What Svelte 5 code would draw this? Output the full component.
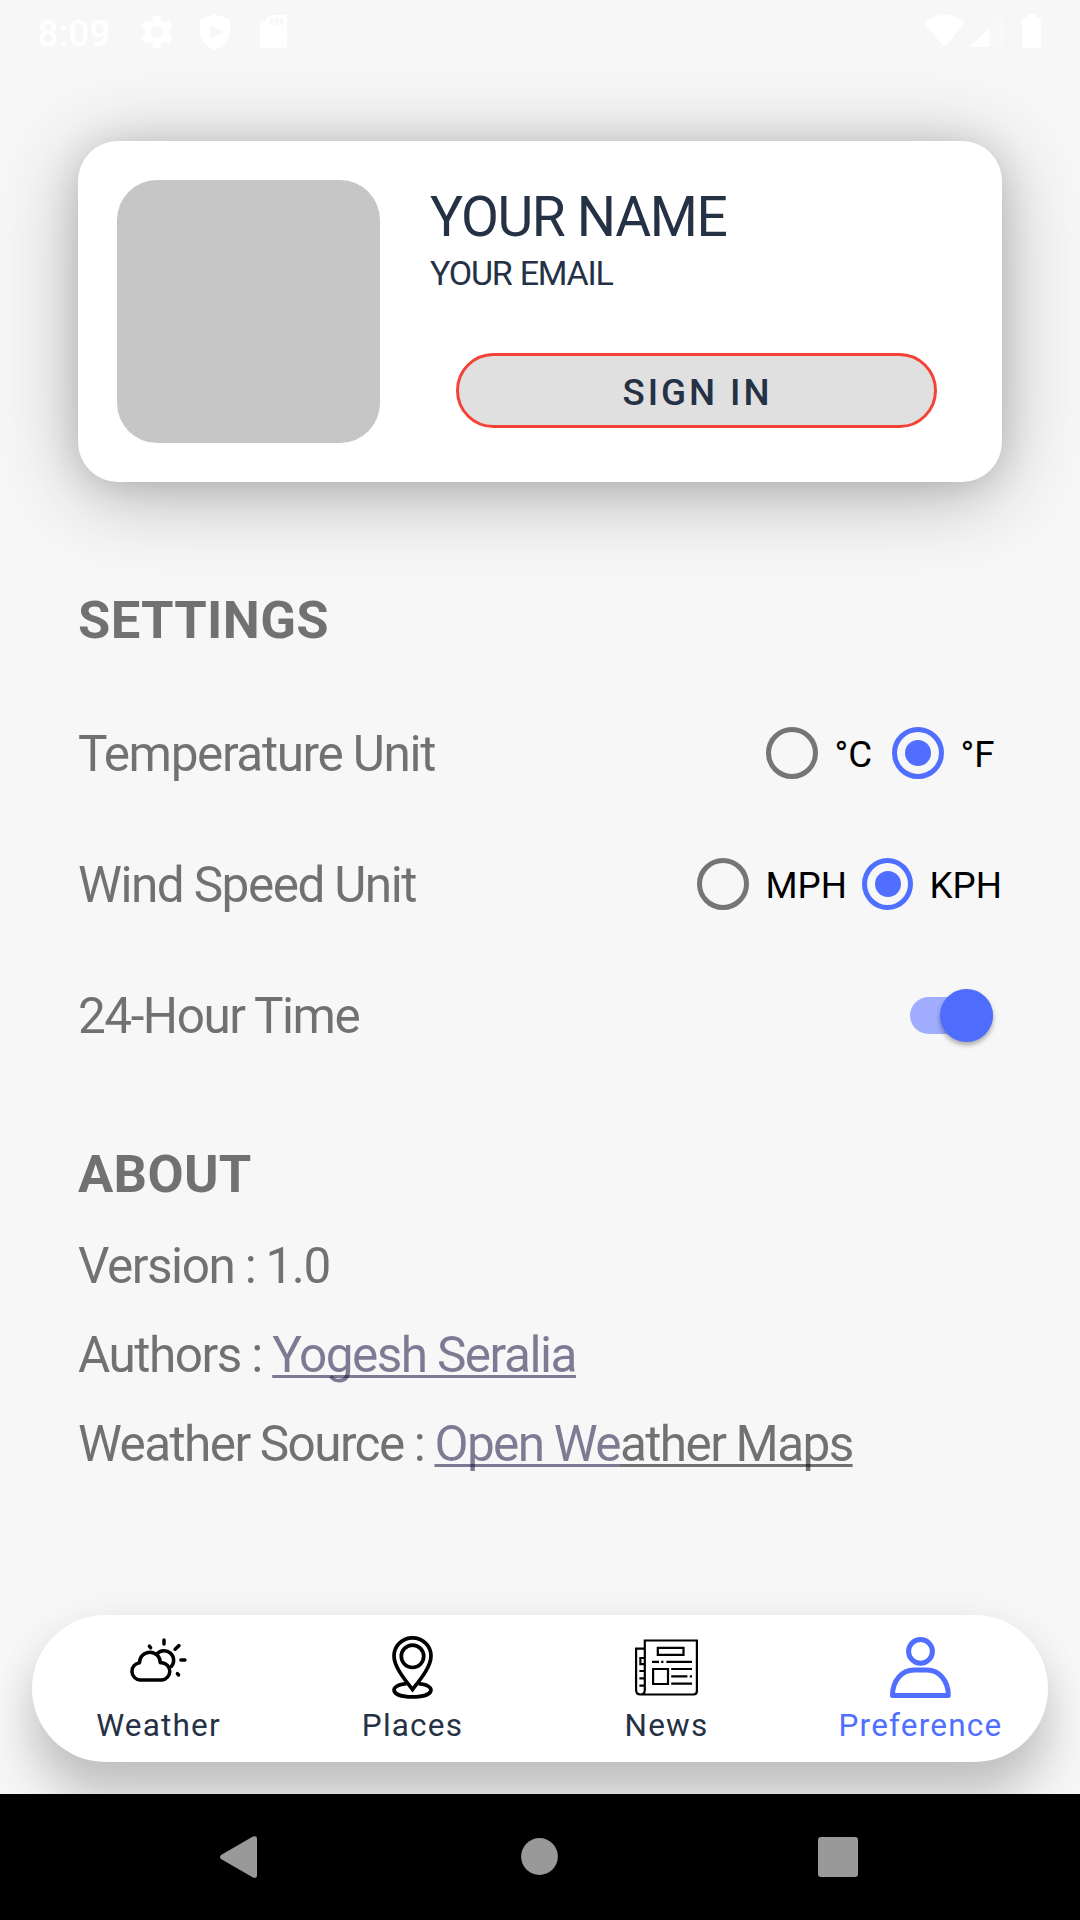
<script>
  let temperature = $state('°F');
  let wind = $state('KPH');
  let hour24 = $state(true);
  const rows = [
    { label: 'Temperature Unit', key: 'temp', options: ['°C', '°F'] },
    { label: 'Wind Speed Unit', key: 'wind', options: ['MPH', 'KPH'] }
  ];
  const chosen = (key) => (key === 'temp' ? temperature : wind);
  function choose(key, value) {
    if (key === 'temp') temperature = value;
    else wind = value;
  }
</script>

<div class="screen">
  <header class="status">
    <span class="time">8:09</span>
    <svg class="gear" width="40" height="40" viewBox="0 0 24 24"><path d="M19.14 12.94c.04-.3.06-.61.06-.94 0-.32-.02-.64-.07-.94l2.03-1.58a.49.49 0 0 0 .12-.61l-1.92-3.32a.49.49 0 0 0-.59-.22l-2.39.96c-.5-.38-1.03-.7-1.62-.94l-.36-2.54a.48.48 0 0 0-.48-.41h-3.84a.48.48 0 0 0-.47.41l-.36 2.54c-.59.24-1.13.57-1.62.94l-2.39-.96a.48.48 0 0 0-.59.22L2.74 8.87a.48.48 0 0 0 .12.61l2.03 1.58c-.05.3-.09.63-.09.94s.02.64.07.94l-2.03 1.58a.49.49 0 0 0-.12.61l1.92 3.32c.12.22.37.29.59.22l2.39-.96c.5.38 1.03.7 1.62.94l.36 2.54c.05.24.24.41.48.41h3.84c.24 0 .44-.17.47-.41l.36-2.54c.59-.24 1.13-.56 1.62-.94l2.39.96c.22.08.47 0 .59-.22l1.92-3.32a.48.48 0 0 0-.12-.61zM12 15.6A3.6 3.6 0 1 1 12 8.4a3.6 3.6 0 0 1 0 7.2z"/></svg>
    <svg class="shield" width="30" height="36" viewBox="0 0 30 36"><path fill-rule="evenodd" d="M15 0 30 6V16C30 26 24 33.500 15 36 6 33.500 0 26 0 16V6ZM10 11V25L23 18Z"/></svg>
    <svg class="sd" width="27" height="33" viewBox="0 0 27 33"><path fill-rule="evenodd" d="M10 0H24Q27 0 27 3V30Q27 33 24 33H3Q0 33 0 30V10ZM10 3.500V10H13.500V3.500ZM15.200 3.500V10H18.500V3.500ZM20.200 3.500V10H23.500V3.500Z"/></svg>
    <svg class="wifi" width="41" height="31" viewBox="0 0 41 31"><path d="M1 6.500C12-2.100 29-2.100 40 6.500Q41.200 7.500 40 9L22.500 29.800Q20.500 31.700 18.500 29.800L1 9Q-.2 7.500 1 6.500Z"/></svg>
    <svg class="signal" width="31" height="31" viewBox="0 0 31 31"><path opacity=".3" d="M18 13 29 1.500Q31 0 31 2V31H18Z"/><path d="M18 12.500V31H1.500Q-.8 31 .8 29Z"/></svg>
    <svg class="battery" width="19" height="34" viewBox="0 0 19 34"><path d="M5 0H14V4H17.500Q19 4 19 5.500V32.500Q19 34 17.500 34H1.500Q0 34 0 32.500V5.500Q0 4 1.500 4H5Z"/></svg>
  </header>

  <main>
    <section class="card">
      <div class="avatar"></div>
      <div class="profile">
        <div class="name">YOUR NAME</div>
        <div class="email">YOUR EMAIL</div>
        <button class="signin">SIGN IN</button>
      </div>
    </section>

    <h2 class="settings-title">SETTINGS</h2>
    {#each rows as row}
      <div class="row {row.key}">
        <span class="label">{row.label}</span>
        <div class="options">
          {#each row.options as option}
            <button class="option" class:on={chosen(row.key) === option} onclick={() => choose(row.key, option)}>
              <span class="radio"></span><span class="unit">{option}</span>
            </button>
          {/each}
        </div>
      </div>
    {/each}
    <div class="row">
      <span class="label">24-Hour Time</span>
      <button class="switch" class:off={!hour24} aria-label="24-Hour Time" onclick={() => (hour24 = !hour24)}><span class="thumb"></span></button>
    </div>

    <h2 class="about-title">ABOUT</h2>
    <p>Version : 1.0</p>
    <p>Authors : <span class="link visited">Yogesh Seralia</span></p>
    <p class="source">Weather Source : <span class="link visited">Open We</span><span class="link">ather Maps</span></p>
  </main>

  <nav class="tabs">
    <div class="tab">
      <svg width="63" height="63" viewBox="0 0 63 63" stroke-width="3.500" stroke-linecap="round" stroke-linejoin="round"><path d="M13 44H35A8.700 8.700 0 0 0 35 26.700H33.300A10.400 10.400 0 0 0 12.500 26.700A8.700 8.700 0 0 0 13 44Z"/><path d="M30 18A9.300 9.300 0 1 1 44.300 30.500M37 4V8M48.100 13.200 52 9.600M53.900 24H57.900M50.400 37.600 51.600 39M22.400 10.200 23.600 11.800"/></svg>
      <span>Weather</span>
    </div>
    <div class="tab">
      <svg width="63" height="63" viewBox="0 0 63 63" stroke-width="3.700"><path d="M31.500 53.500C24.500 44.500 13 31 13 20A18.500 18.200 0 0 1 50 20C50 31 38.500 44.500 31.500 53.500Z"/><circle cx="31.500" cy="20.300" r="11.200"/><path d="M25.500 47.600C8 49 8 60.700 31.500 60.900 55 60.700 55 49 37.500 47.600"/></svg>
      <span>Places</span>
    </div>
    <div class="tab">
      <svg width="63" height="63" viewBox="0 0 63 63" stroke-width="2.200"><path d="M5.500 58.500Q9.800 58.500 9.800 54V4.500H61.900V55Q61.900 58.500 58.400 58.500H5.500Q1.100 58.500 1.100 54V12.700H9.800M9.800 22H5.400V28.200H9.800M4.400 35H9.800M4.400 42.300H9.800M4.400 49.700H9.800M22.800 11.800H48.500V18.900H22.800ZM17 25.800H24M26.200 25.800H28.400M31.400 25.800H57M18.100 33H33V48H18.100ZM36.200 33H57M36.200 40.300H52.400M54.800 40.300H57M36.200 47.700H57"/></svg>
      <span>News</span>
    </div>
    <div class="tab active">
      <svg width="63" height="63" viewBox="0 0 63 63" stroke-width="5" stroke-linejoin="round"><circle cx="31.500" cy="15.400" r="11.900"/><path d="M3.500 59.400C3.500 44.500 13 34 25 34H38C50 34 59.300 44.500 59.300 59.400Z"/></svg>
      <span>Preference</span>
    </div>
  </nav>

  <footer>
    <svg width="37" height="42" viewBox="0 0 37 42"><path d="M1 19 33 .6Q37-1 37 3V39Q37 43 33 41.400L1 23Q-1 21 1 19Z"/></svg>
    <svg class="home" width="37" height="37" viewBox="0 0 37 37"><circle cx="18.500" cy="18.500" r="18.400"/></svg>
    <svg width="40" height="40" viewBox="0 0 40 40"><rect width="40" height="40" rx="3"/></svg>
  </footer>
</div>

<style>
  :global(body) { margin: 0; background: #f7f7f7; }
  .screen {
    width: 1080px; height: 1920px; overflow: hidden; display: flex; flex-direction: column;
    background: #f7f7f7; font-family: Roboto, sans-serif; color: rgba(0, 0, 0, .54);
  }
  button { font: inherit; border: 0; padding: 0; background: none; color: inherit; }
  svg { display: block; flex: none; }
  .status { height: 63px; display: flex; align-items: flex-start; box-sizing: border-box; padding: 0 39px 0 37.500px; fill: #fff; color: #fff; flex: none; }
  .time { width: 99.500px; font-size: 37px; font-weight: 500; line-height: 43px; padding-top: 12px; }
  .gear { margin-top: 12px; }
  .shield { margin: 14px 0 0 23px; }
  .sd { margin: 15px 0 0 30px; }
  .wifi { margin: 14.500px 0 0 auto; }
  .signal { margin: 15.500px 0 0 6px; }
  .battery { margin: 14px 0 0 20px; }

  main { flex: 1; padding: 78px 78px 0 78px; }
  .card {
    height: 341px; box-sizing: border-box; border-radius: 40px; background: #fff; display: flex; padding: 39px;
    box-shadow: 0 12px 84px rgba(0, 0, 0, .27), 0 4px 36px rgba(0, 0, 0, .13);
  }
  .avatar { width: 263px; height: 263px; border-radius: 40px; background: #c6c6c6; flex: none; }
  .profile { flex: 1; display: flex; flex-direction: column; padding-left: 50px; color: #253145; }
  .name { font-size: 55.125px; line-height: 64px; margin-top: 5px; letter-spacing: -.025em; }
  .email { font-size: 34px; line-height: 40px; margin-top: 4px; letter-spacing: -.036em; word-spacing: 1px; }
  .signin {
    box-sizing: border-box; width: 481px; height: 75px; margin: 60px 0 0 26px; padding: 3px 0 0 2px; border: 3px solid #f44336; border-radius: 38px;
    background: #e0e0e0; font-size: 36.750px; font-weight: 500; letter-spacing: .08em; flex: none;
  }
  h2 { margin: 0; font-size: 52.500px; line-height: 62px; font-weight: 700; letter-spacing: .006em; }
  .settings-title { margin-top: 107px; }
  .row { height: 131px; display: flex; align-items: center; justify-content: space-between; }
  .settings-title + .row { margin-top: 37px; }
  .label, p { font-size: 49.500px; line-height: 58px; letter-spacing: -.03em; word-spacing: -.4px; }
  .temp .label { letter-spacing: -.028em; }
  p.source { letter-spacing: -.0325em; }
  .options { display: flex; }
  .option { display: flex; align-items: center; color: #000; font-size: 36.750px; line-height: 43px; }
  .radio { box-sizing: border-box; width: 52px; height: 52px; margin-bottom: 2px; border: 5.250px solid #757575; border-radius: 50%; display: grid; place-items: center; }
  .on .radio { border-color: #506eff; }
  .on .radio::after { content: ''; width: 26px; height: 26px; border-radius: 50%; background: #506eff; }
  .unit { margin-left: 16.500px; padding-top: 1px; text-align: left; }
  .temp .option { width: 126px; }
  .temp .option:last-child { width: 110px; }
  .wind .option { width: 165px; }
  .wind .option:last-child { width: 140px; }
  .switch { width: 82.500px; height: 37px; border-radius: 19px; background: #a1adff; display: flex; align-items: center; justify-content: flex-end; margin-right: 9.500px; }
  .thumb { width: 52.500px; height: 52.500px; border-radius: 50%; background: #4f6dfd; box-shadow: 0 3px 5px rgba(0, 0, 0, .32); }
  .off { background: #bbb; justify-content: flex-start; }
  .off .thumb { background: #fafafa; }
  .about-title { margin-top: 62px; }
  p { margin: 0 0 31px; white-space: nowrap; }
  .about-title + p { margin-top: 32px; }
  .link { text-decoration: underline; text-decoration-skip-ink: none; text-decoration-thickness: 3px; text-underline-offset: 3px; }
  .visited { color: rgba(25, 17, 65, .54); }

  .tabs {
    height: 147px; flex: none; margin: 0 32px 32px; border-radius: 74px; background: #fff; display: grid; grid-template-columns: repeat(4, 1fr);
    box-shadow: 0 40px 50px rgba(0, 0, 0, .19), 0 6px 40px rgba(0, 0, 0, .07); color: #253145;
  }
  .tab { display: flex; flex-direction: column; align-items: center; padding: 21px 2px 0 0; font-size: 31.500px; line-height: 37px; letter-spacing: .038em; }
  .tab svg { fill: none; stroke: #000; margin-bottom: 8px; }
  .tab span { padding-left: 1px; }
  .active { color: #506eff; }
  .active svg { stroke: #506eff; }
  footer { height: 126px; flex: none; box-sizing: border-box; padding: 0 222px 0 220px; display: flex; align-items: center; justify-content: space-between; background: #000; fill: #999; position: relative; }
  .home { margin: 0 0 1px 3px; }
</style>
